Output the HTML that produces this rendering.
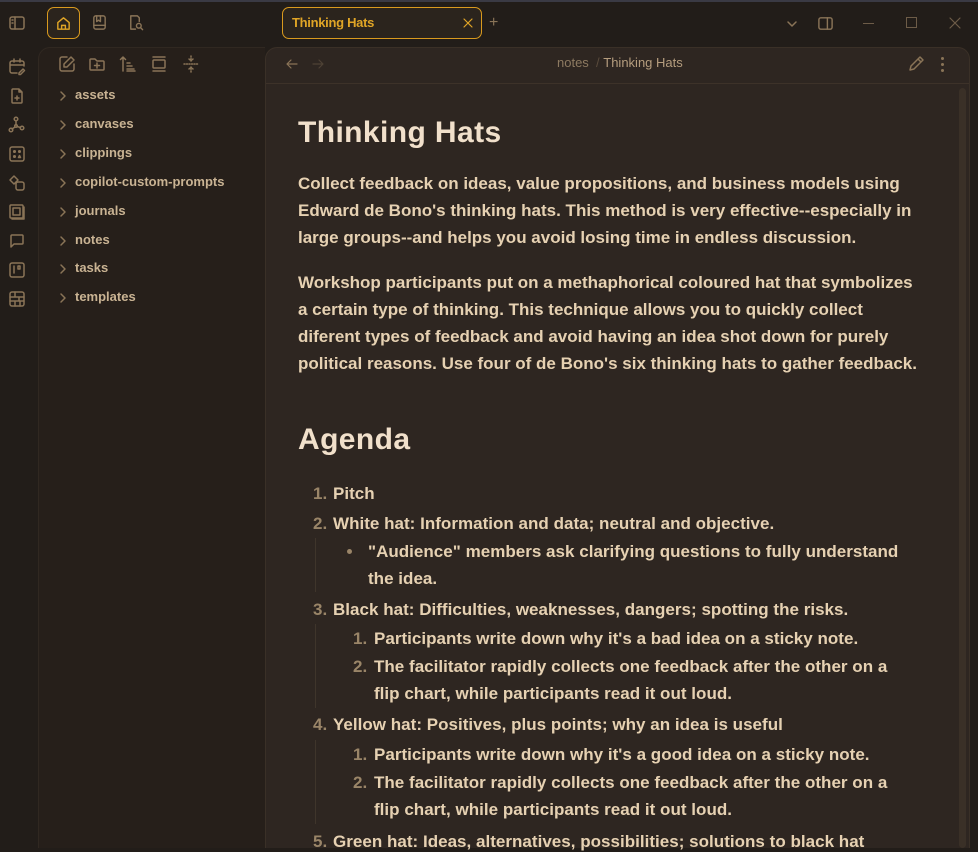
<!DOCTYPE html>
<html><head><meta charset="utf-8"><style>
*{margin:0;padding:0;box-sizing:border-box}
body{width:978px;height:848px;overflow:hidden;background:#221d19;font-family:"Liberation Sans",sans-serif;position:relative}
.abs{position:absolute}
.ic{position:absolute;fill:none;stroke:#8a7457;stroke-width:1.5;stroke-linecap:round;stroke-linejoin:round}
.side{left:38px;top:47px;width:227px;height:801px;background:#261f1a;border-left:1px solid #302821;border-top:1px solid #302821;border-top-left-radius:12px}
.rib{left:0;top:47px;width:38px;height:801px;background:#221d19}
.folder{position:absolute;left:75px;font-size:13px;font-weight:bold;color:#c9b393;white-space:nowrap}
.chev{position:absolute;left:58px}
.ed{left:265px;top:47px;width:705px;height:801px;background:#2e2621;border:1px solid #3a3027;border-bottom:none;border-top-left-radius:12px;border-top-right-radius:12px}
.t{position:absolute;white-space:nowrap;font-size:17px;font-weight:bold;color:#e6d1b2;letter-spacing:0.02px}
.p{letter-spacing:0}
.n{position:absolute;white-space:nowrap;font-size:17px;font-weight:bold;color:#9a8568}
.h{position:absolute;white-space:nowrap;font-size:30px;font-weight:bold;color:#f1e0cb;letter-spacing:0.4px}
.vl{position:absolute;width:1px;background:#3f352b}
</style></head><body>
<div class="abs" style="left:0;top:0;width:978px;height:2px;background:#3a3a44"></div>
<svg class="ic" style="left:8px;top:14px" width="18" height="18" viewBox="0 0 18 18"><rect x="2" y="3" width="14" height="12" rx="2"/><path d="M7 3v12M4 6h1M4 9h1"/></svg>
<div class="abs" style="left:47px;top:7px;width:33px;height:32px;border:1px solid #d99a1e;border-radius:7px;background:#2b241d"></div>
<svg class="ic" style="left:55px;top:15px;stroke:#e0a526" width="17" height="17" viewBox="0 0 18 18"><path d="M3 8l6-5 6 5v7H3z M7 15v-4h4v4"/></svg>
<svg class="ic" style="left:91px;top:14px" width="17" height="17" viewBox="0 0 18 18"><rect x="3" y="2" width="12" height="14" rx="2"/><path d="M6 2v6l2-1.5 2 1.5V2M3 12h12"/></svg>
<svg class="ic" style="left:127px;top:14px" width="17" height="17" viewBox="0 0 18 18"><path d="M13 8V4l-2-2H4v14h5"/><circle cx="12.5" cy="12.5" r="2.5"/><path d="M14.5 14.5l2 2"/></svg>
<div class="abs" style="left:282px;top:7px;width:200px;height:32px;border:1px solid #d99a1e;border-radius:7px;background:#2b241d"></div>
<div class="abs" style="left:292px;top:15px;font-size:13px;font-weight:bold;color:#e0a526;letter-spacing:-0.3px">Thinking Hats</div>
<svg class="ic" style="left:463px;top:18px;stroke:#e0a526;stroke-width:1.2" width="10" height="10" viewBox="0 0 10 10"><path d="M1 1l8 8M9 1L1 9"/></svg>
<div class="abs" style="left:489px;top:14px;font-size:16px;color:#8a7457">+</div>
<svg class="ic" style="left:785px;top:17px" width="14" height="14" viewBox="0 0 14 14"><path d="M3 5l4 4 4-4"/></svg>
<svg class="ic" style="left:817px;top:15px" width="17" height="17" viewBox="0 0 18 18"><rect x="2" y="3" width="14" height="12" rx="2"/><path d="M11 3v12"/></svg>
<div class="abs" style="left:863px;top:23px;width:11px;height:1px;background:#6d5c48"></div>
<div class="abs" style="left:906px;top:17px;width:11px;height:11px;border:1px solid #6d5c48"></div>
<svg class="ic" style="left:948px;top:16px;stroke:#6d5c48;stroke-width:1.2" width="14" height="14" viewBox="0 0 14 14"><path d="M2 2l10 10M12 2L2 12"/></svg>

<div class="abs rib"></div>
<div class="abs side"></div>
<svg class="ic" style="left:8px;top:58px" width="18" height="18" viewBox="0 0 18 18"><path d="M9 15H4a2 2 0 0 1-2-2V5a2 2 0 0 1 2-2h10a2 2 0 0 1 2 2v3M2 7h14M6 1v3M12 1v3M11 15l4-4 1.5 1.5-4 4H11z"/></svg>
<svg class="ic" style="left:8px;top:87px" width="18" height="18" viewBox="0 0 18 18"><path d="M11 2H5a1 1 0 0 0-1 1v12a1 1 0 0 0 1 1h8a1 1 0 0 0 1-1V5zM11 2v3h3M9 9v4M7 11h4"/></svg>
<svg class="ic" style="left:8px;top:116px" width="18" height="18" viewBox="0 0 18 18"><circle cx="8" cy="3" r="1.8"/><circle cx="3" cy="14" r="1.8"/><circle cx="14" cy="12" r="1.8"/><circle cx="8" cy="10" r="1.3"/><path d="M8 5v4M7 11l-3 2M9 10.5l3.5 1"/></svg>
<svg class="ic" style="left:8px;top:145px" width="18" height="18" viewBox="0 0 18 18"><rect x="2" y="2" width="14" height="14" rx="2"/><circle cx="6.5" cy="6.5" r=".8"/><circle cx="11.5" cy="6.5" r=".8"/><circle cx="6.5" cy="11.5" r=".8"/><path d="M10.5 12.5l1-2 1 2z"/></svg>
<svg class="ic" style="left:8px;top:174px" width="18" height="18" viewBox="0 0 18 18"><path d="M6 2l4 4-4 4-4-4z"/><rect x="8" y="8" width="8" height="8" rx="2"/></svg>
<svg class="ic" style="left:8px;top:203px" width="18" height="18" viewBox="0 0 18 18"><rect x="2" y="2" width="13" height="13" rx="1"/><rect x="5" y="5" width="7" height="7"/><path d="M4 16h12V4"/></svg>
<svg class="ic" style="left:8px;top:232px" width="18" height="18" viewBox="0 0 18 18"><path d="M3 15V4a1 1 0 0 1 1-1h10a1 1 0 0 1 1 1v7a1 1 0 0 1-1 1H6z"/></svg>
<svg class="ic" style="left:8px;top:261px" width="18" height="18" viewBox="0 0 18 18"><rect x="2" y="2" width="14" height="14" rx="2"/><path d="M6 5v7M10 5h2v3h-2z"/></svg>
<svg class="ic" style="left:8px;top:290px" width="18" height="18" viewBox="0 0 18 18"><rect x="2" y="2" width="14" height="14" rx="2"/><path d="M2 7h14M2 11h14M7 2v5M11 7v4M7 11v5M12 11v5"/></svg>
<svg class="ic" style="left:58px;top:55px" width="18" height="18" viewBox="0 0 18 18"><path d="M9 2H4a2 2 0 0 0-2 2v10a2 2 0 0 0 2 2h10a2 2 0 0 0 2-2V9M13 2l3 3-7 7H6V9z"/></svg>
<svg class="ic" style="left:88px;top:55px" width="18" height="18" viewBox="0 0 18 18"><path d="M2 5a1 1 0 0 1 1-1h4l2 2h6a1 1 0 0 1 1 1v7a1 1 0 0 1-1 1H3a1 1 0 0 1-1-1zM9 8v5M6.5 10.5h5"/></svg>
<svg class="ic" style="left:119px;top:55px" width="18" height="18" viewBox="0 0 18 18"><path d="M4 16V2M1.5 4.5L4 2l2.5 2.5M8 8h3M8 11h5M8 14h7M8 16h8"/></svg>
<svg class="ic" style="left:150px;top:55px" width="18" height="18" viewBox="0 0 18 18"><path d="M3 2h12M3 16h12"/><rect x="3" y="5" width="12" height="8" rx="1"/></svg>
<svg class="ic" style="left:182px;top:55px" width="18" height="18" viewBox="0 0 18 18"><path d="M9 1v5M7 4l2 2 2-2M9 17v-5M7 14l2-2 2 2M2 9h14" stroke-dasharray="1 1.5"/></svg>
<svg class="ic chev" style="top:90px" width="10" height="12" viewBox="0 0 10 12"><path d="M3 2l4 4-4 4"/></svg><div class="folder" style="top:87px">assets</div>
<svg class="ic chev" style="top:119px" width="10" height="12" viewBox="0 0 10 12"><path d="M3 2l4 4-4 4"/></svg><div class="folder" style="top:116px">canvases</div>
<svg class="ic chev" style="top:148px" width="10" height="12" viewBox="0 0 10 12"><path d="M3 2l4 4-4 4"/></svg><div class="folder" style="top:145px">clippings</div>
<svg class="ic chev" style="top:177px" width="10" height="12" viewBox="0 0 10 12"><path d="M3 2l4 4-4 4"/></svg><div class="folder" style="top:174px">copilot-custom-prompts</div>
<svg class="ic chev" style="top:206px" width="10" height="12" viewBox="0 0 10 12"><path d="M3 2l4 4-4 4"/></svg><div class="folder" style="top:203px">journals</div>
<svg class="ic chev" style="top:235px" width="10" height="12" viewBox="0 0 10 12"><path d="M3 2l4 4-4 4"/></svg><div class="folder" style="top:232px">notes</div>
<svg class="ic chev" style="top:263px" width="10" height="12" viewBox="0 0 10 12"><path d="M3 2l4 4-4 4"/></svg><div class="folder" style="top:260px">tasks</div>
<svg class="ic chev" style="top:292px" width="10" height="12" viewBox="0 0 10 12"><path d="M3 2l4 4-4 4"/></svg><div class="folder" style="top:289px">templates</div>

<div class="abs ed"></div>
<div class="abs" style="left:266px;top:83px;width:703px;height:1px;background:#3d3229"></div>
<div class="abs" style="left:959px;top:88px;width:7px;height:760px;background:#3a3027;border-radius:4px"></div>
<svg class="ic" style="left:285px;top:57px;stroke-width:1.2" width="14" height="14" viewBox="0 0 14 14"><path d="M12 7H2M6 3L2 7l4 4"/></svg>
<svg class="ic" style="left:311px;top:57px;stroke:#4e4235;stroke-width:1.2" width="14" height="14" viewBox="0 0 14 14"><path d="M2 7h10M8 3l4 4-4 4"/></svg>
<div class="abs" style="left:557px;top:55px;font-size:13px;color:#8d7a61">notes <span style="color:#5a4b3c">&nbsp;/&nbsp;</span><span style="color:#b59d7e">Thinking Hats</span></div>
<svg class="ic" style="left:907px;top:55px" width="18" height="18" viewBox="0 0 18 18"><path d="M13 2l3 3-9 9-4 1 1-4z M11 4l3 3"/></svg>
<div class="abs" style="left:941px;top:57px;width:3px;height:3px;border-radius:50%;background:#8a7457;box-shadow:0 6px 0 #8a7457,0 12px 0 #8a7457"></div>

<div class="h" style="left:298px;top:116px">Thinking Hats</div>
<div class="t p" style="left:298px;top:174px">Collect feedback on ideas, value propositions, and business models using</div>
<div class="t p" style="left:298px;top:201px">Edward de Bono's thinking hats. This method is very effective--especially in</div>
<div class="t p" style="left:298px;top:228px">large groups--and helps you avoid losing time in endless discussion.</div>
<div class="t p" style="left:298px;top:273px">Workshop participants put on a methaphorical coloured hat that symbolizes</div>
<div class="t p" style="left:298px;top:300px">a certain type of thinking. This technique allows you to quickly collect</div>
<div class="t p" style="left:298px;top:327px">diferent types of feedback and avoid having an idea shot down for purely</div>
<div class="t p" style="left:298px;top:354px">political reasons. Use four of de Bono's six thinking hats to gather feedback.</div>
<div class="h" style="left:298px;top:423px">Agenda</div>

<div class="n" style="left:313px;top:484px">1.</div><div class="t" style="left:333px;top:484px">Pitch</div>
<div class="n" style="left:313px;top:514px">2.</div><div class="t" style="left:333px;top:514px">White hat: Information and data; neutral and objective.</div>
<div class="vl" style="left:315px;top:538px;height:54px"></div>
<div class="abs" style="left:347px;top:549px;width:5px;height:5px;border-radius:50%;background:#9a8568"></div>
<div class="t" style="left:368px;top:542px">"Audience" members ask clarifying questions to fully understand</div>
<div class="t" style="left:368px;top:569px">the idea.</div>
<div class="n" style="left:313px;top:600px">3.</div><div class="t" style="left:333px;top:600px">Black hat: Difficulties, weaknesses, dangers; spotting the risks.</div>
<div class="vl" style="left:315px;top:624px;height:84px"></div>
<div class="n" style="left:353px;top:629px">1.</div><div class="t" style="left:374px;top:629px">Participants write down why it's a bad idea on a sticky note.</div>
<div class="n" style="left:353px;top:657px">2.</div><div class="t" style="left:374px;top:657px">The facilitator rapidly collects one feedback after the other on a</div>
<div class="t" style="left:374px;top:684px">flip chart, while participants read it out loud.</div>
<div class="n" style="left:313px;top:715px">4.</div><div class="t" style="left:333px;top:715px">Yellow hat: Positives, plus points; why an idea is useful</div>
<div class="vl" style="left:315px;top:740px;height:84px"></div>
<div class="n" style="left:353px;top:745px">1.</div><div class="t" style="left:374px;top:745px">Participants write down why it's a good idea on a sticky note.</div>
<div class="n" style="left:353px;top:773px">2.</div><div class="t" style="left:374px;top:773px">The facilitator rapidly collects one feedback after the other on a</div>
<div class="t" style="left:374px;top:800px">flip chart, while participants read it out loud.</div>
<div class="n" style="left:313px;top:832px">5.</div><div class="t" style="left:333px;top:832px">Green hat: Ideas, alternatives, possibilities; solutions to black hat</div>
</body></html>
